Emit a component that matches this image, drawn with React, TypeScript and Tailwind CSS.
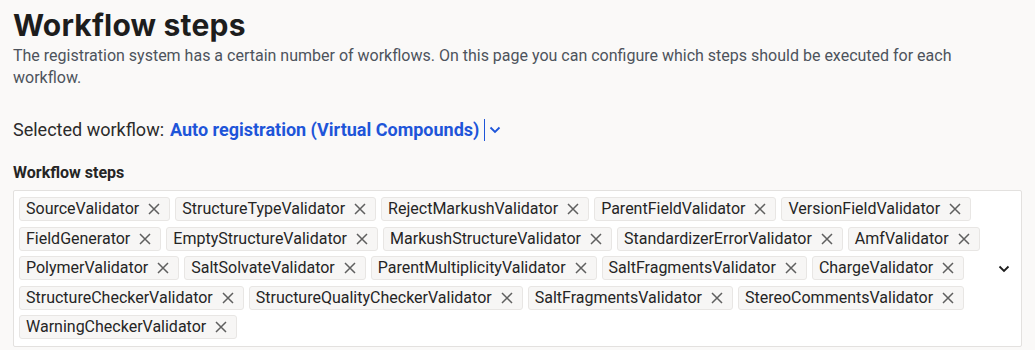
import React from "react";

const steps = [
  "SourceValidator",
  "StructureTypeValidator",
  "RejectMarkushValidator",
  "ParentFieldValidator",
  "VersionFieldValidator",
  "FieldGenerator",
  "EmptyStructureValidator",
  "MarkushStructureValidator",
  "StandardizerErrorValidator",
  "AmfValidator",
  "PolymerValidator",
  "SaltSolvateValidator",
  "ParentMultiplicityValidator",
  "SaltFragmentsValidator",
  "ChargeValidator",
  "StructureCheckerValidator",
  "StructureQualityCheckerValidator",
  "SaltFragmentsValidator",
  "StereoCommentsValidator",
  "WarningCheckerValidator",
];

const CloseIcon = () => (
  <svg width="12" height="12" viewBox="0 0 12 12" className="text-[#5f5f5f]">
    <path d="M1 1L11 11M11 1L1 11" stroke="currentColor" strokeWidth="1.5" />
  </svg>
);

const Chevron = ({ className }: { className?: string }) => (
  <svg width="12" height="8" viewBox="0 0 12 8" className={className}>
    <path d="M1.5 1.5L6 6L10.5 1.5" fill="none" stroke="currentColor" strokeWidth="1.8" />
  </svg>
);

const StepChip = ({ label }: { label: string }) => (
  <span className="flex h-6 items-center gap-[9px] rounded-[3px] border border-[#e8e6e4] bg-[#f7f6f5] pl-[6px] pr-[9px] text-[16px] text-[#252525]">
    {label}
    <CloseIcon />
  </span>
);

const App = () => {
  return (
    <div className="min-h-[350px] bg-[#faf9f8] px-[13px] pt-[5px] font-['Roboto',sans-serif]">
      <h1 className="font-['Inter',sans-serif] text-[30px] font-bold leading-[40px] tracking-[0.2px] text-[#1d1d1d]">
        Workflow steps
      </h1>
      <p className="text-[16px] leading-[22px] text-[#4d535c]">
        The registration system has a certain number of workflows. On this page you can configure which steps
        should be executed for each workflow.
      </p>

      <div className="mt-[27px] flex items-center text-[18px] text-[#2b2b2b]">
        <span>Selected workflow:</span>
        <span className="ml-[6px] font-bold text-[#1e55d9]">Auto registration (Virtual Compounds)</span>
        <span className="ml-[5px] h-[22px] w-px bg-[#1e55d9]" />
        <Chevron className="ml-[4px] text-[#1e55d9]" />
      </div>

      <h2 className="mt-[20px] text-[16px] font-bold leading-[20px] text-[#252525]">Workflow steps</h2>

      <div className="mt-[7px] flex min-h-[157px] items-center rounded-[2px] border border-[#e3e1df] bg-white">
        <div className="flex flex-1 flex-wrap gap-x-[5px] gap-y-[5.5px] self-start px-[5px] pt-[6px]">
          {steps.map((s, i) => (
            <StepChip key={i} label={s} />
          ))}
        </div>
        <Chevron className="mr-[11px] ml-2 text-[#1d1d1d]" />
      </div>
    </div>
  );
};

export default App;
